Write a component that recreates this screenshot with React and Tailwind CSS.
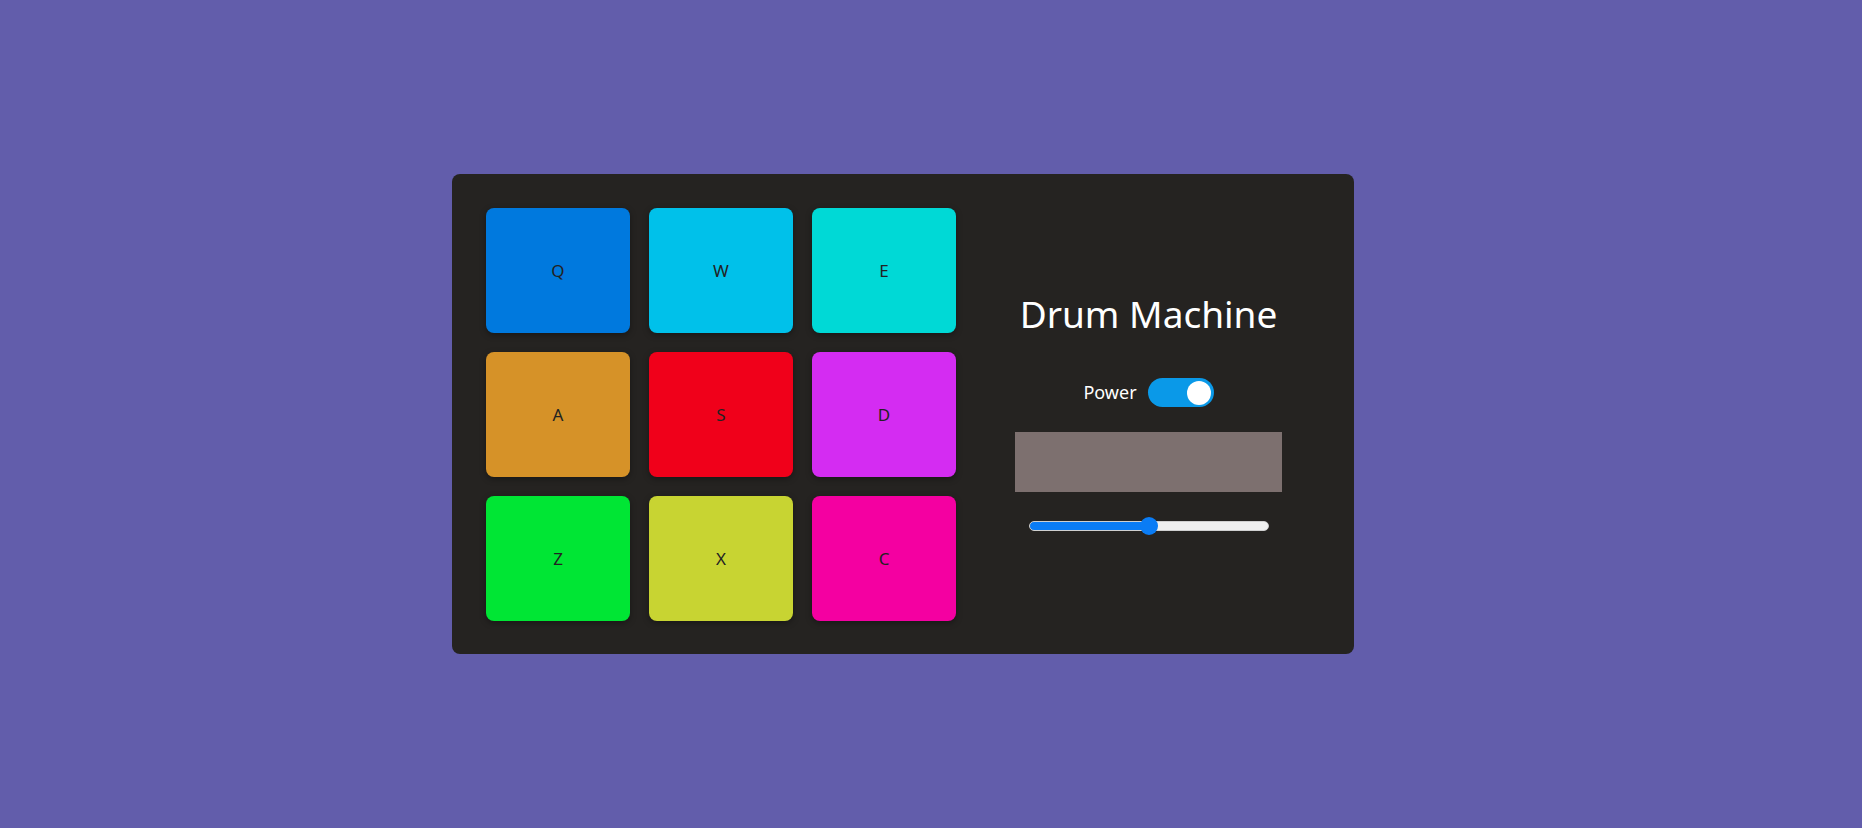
import React, { useState } from 'react';

const pads = [
  { key: 'Q', color: 'bg-[#0079de]' },
  { key: 'W', color: 'bg-[#00c1ea]' },
  { key: 'E', color: 'bg-[#00d9d6]' },
  { key: 'A', color: 'bg-[#d69228]' },
  { key: 'S', color: 'bg-[#f0001a]' },
  { key: 'D', color: 'bg-[#d42cf2]' },
  { key: 'Z', color: 'bg-[#00e634]' },
  { key: 'X', color: 'bg-[#c8d432]' },
  { key: 'C', color: 'bg-[#f400a1]' },
];

function Pad({ label, color }) {
  return (
    <button
      className={`${color} w-[144px] h-[125px] rounded-[8px] shadow-[0_2px_6px_rgba(0,0,0,0.35)] flex items-center justify-center text-[17px] text-[#222222]`}
    >
      {label}
    </button>
  );
}

export default function App() {
  const [power, setPower] = useState(true);
  const [volume, setVolume] = useState(50);

  return (
    <div
      className="w-full h-[828px] bg-[#625dab] flex items-center justify-center pr-[56px]"
      style={{ fontFamily: '"Noto Sans", "Open Sans", sans-serif' }}
    >
      <div className="w-[902px] h-[480px] bg-[#252321] rounded-[8px] flex pl-[34px] pt-[34px] pb-[33px]">
        <div className="grid grid-cols-[144px_144px_144px] gap-x-[19px] gap-y-[19px] content-start">
          {pads.map((p) => (
            <Pad key={p.key} label={p.key} color={p.color} />
          ))}
        </div>

        <div className="flex-1 flex flex-col items-center pt-[84px] pr-[13px]">
          <h1 className="text-white text-[37px] leading-[44px] mb-[42px]">Drum Machine</h1>

          <div className="flex items-center gap-[11px] mb-[25px] h-[29px]">
            <span className="text-white text-[18px]">Power</span>
            <button
              onClick={() => setPower(!power)}
              className={`w-[66px] h-[29px] rounded-full flex items-center px-[3px] ${power ? 'bg-[#0a99e8] justify-end' : 'bg-[#888888] justify-start'}`}
            >
              <span className="w-[24px] h-[24px] rounded-full bg-white block" />
            </button>
          </div>

          <div className="w-[267px] h-[60px] bg-[#7d706f] mb-[29px]" />

          <input
            type="range"
            min="0"
            max="100"
            value={volume}
            onChange={(e) => setVolume(e.target.value)}
            className="w-[240px] h-[10px] rounded-full appearance-none border border-[#d0d0d0] outline-none [&::-webkit-slider-thumb]:appearance-none [&::-webkit-slider-thumb]:w-[18px] [&::-webkit-slider-thumb]:h-[18px] [&::-webkit-slider-thumb]:rounded-full [&::-webkit-slider-thumb]:bg-[#0a7cf5] [&::-webkit-slider-thumb]:border-0"
            style={{
              background: `linear-gradient(to right, #0a7cf5 0%, #0a7cf5 ${volume}%, #efefef ${volume}%, #efefef 100%)`,
            }}
          />
        </div>
      </div>
    </div>
  );
}
